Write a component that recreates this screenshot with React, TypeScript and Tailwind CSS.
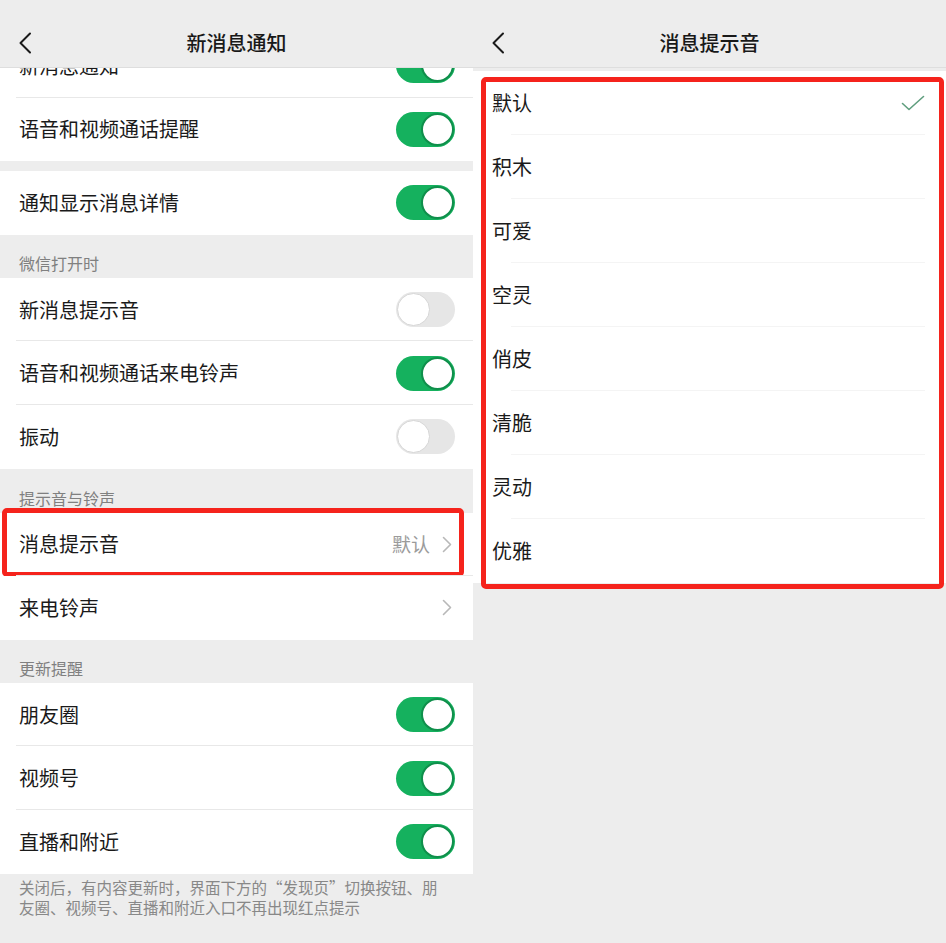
import React from 'react';

const font = "font-['Noto_Sans_CJK_SC','Noto_Sans',sans-serif]";

const BackIcon = () => (
  <svg width="14" height="22" viewBox="0 0 14 22" fill="none">
    <path d="M12 1.5 L2.5 11 L12 20.5" stroke="#1a1a1a" strokeWidth="2" strokeLinecap="round" strokeLinejoin="round" />
  </svg>
);

const Chevron = () => (
  <svg width="10" height="17" viewBox="0 0 10 17" fill="none">
    <path d="M1.5 1.5 L8.5 8.5 L1.5 15.5" stroke="#b8b8b8" strokeWidth="1.6" strokeLinecap="round" strokeLinejoin="round" />
  </svg>
);

const Toggle = ({ on }: { on: boolean }) =>
  on ? (
    <div className="w-[59px] h-[35px] rounded-full bg-[#15b15e] flex items-center justify-end pr-[1px]">
      <div className="w-[33px] h-[33px] rounded-full bg-white border-[2px] border-[#0f8f4b]" />
    </div>
  ) : (
    <div className="w-[59px] h-[35px] rounded-full bg-[#e6e6e6] flex items-center justify-start pl-[1px]">
      <div className="w-[33px] h-[33px] rounded-full bg-white border border-[#d6d6d6]" />
    </div>
  );

const Header = ({ title }: { title: string }) => (
  <div className="h-[68px] shrink-0 bg-[#ededed] border-b border-[#dedede] flex items-center pt-[18px] relative z-10">
    <div className="w-[52px] pl-[18px] flex items-center">
      <BackIcon />
    </div>
    <div className="flex-1 text-center text-[20px] font-medium text-[#191919] pr-[52px] pt-[1px]">{title}</div>
  </div>
);

const Row = ({
  label,
  last,
  children,
  className = '',
}: {
  label: string;
  last?: boolean;
  children?: React.ReactNode;
  className?: string;
}) => (
  <div className={`relative h-[63.6px] bg-white flex items-center pl-[19px] pr-[18px] ${className}`}>
    <span className="flex-1 text-[20px] text-[#1a1a1a] leading-none">{label}</span>
    {children}
    {!last && <div className="absolute left-[16px] right-0 bottom-0 h-px bg-[#e8e8e8]" />}
  </div>
);

const Section = ({ title, h }: { title: string; h: string }) => (
  <div className={`${h} flex items-end pl-[19px] pb-[4px]`}>
    <span className="text-[16px] leading-[22px] text-[#808080]">{title}</span>
  </div>
);

const sounds = ['默认', '积木', '可爱', '空灵', '俏皮', '清脆', '灵动', '优雅'];

export default function App() {
  return (
    <div className={`flex w-[946px] h-[943px] bg-[#ededed] overflow-hidden ${font}`}>
      {/* left: 新消息通知 */}
      <div className="w-[473px] h-full flex flex-col">
        <Header title="新消息通知" />
        <div className="flex-1 overflow-hidden">
          <div className="mt-[-34px]">
            <Row label="新消息通知">
              <Toggle on />
            </Row>
            <Row label="语音和视频通话提醒" last>
              <Toggle on />
            </Row>
            <div className="h-[10px]" />
            <Row label="通知显示消息详情" last>
              <Toggle on />
            </Row>

            <Section title="微信打开时" h="h-[43px]" />
            <Row label="新消息提示音">
              <Toggle on={false} />
            </Row>
            <Row label="语音和视频通话来电铃声">
              <Toggle on />
            </Row>
            <Row label="振动" last>
              <Toggle on={false} />
            </Row>

            <Section title="提示音与铃声" h="h-[44px]" />
            <Row label="消息提示音" className="pr-[21px]">
              <span className="text-[19px] text-[#9b9b9b] mr-[12px]">默认</span>
              <Chevron />
              <div className="absolute left-[2px] right-[9px] top-[-5px] bottom-[-1px] border-[5px] border-[#f5231c] rounded-[5px]" />
            </Row>
            <Row label="来电铃声" last className="pr-[21px]">
              <Chevron />
            </Row>

            <Section title="更新提醒" h="h-[43px]" />
            <Row label="朋友圈">
              <Toggle on />
            </Row>
            <Row label="视频号">
              <Toggle on />
            </Row>
            <Row label="直播和附近" last>
              <Toggle on />
            </Row>

            <div className="pl-[19px] pr-[20px] pt-[3px] text-[15.5px] leading-[20px] text-[#888888]">
              关闭后，有内容更新时，界面下方的“发现页”切换按钮、朋
              <br />
              友圈、视频号、直播和附近入口不再出现红点提示
            </div>
          </div>
        </div>
      </div>

      {/* right: 消息提示音 */}
      <div className="w-[473px] h-full flex flex-col">
        <Header title="消息提示音" />
        <div className="relative mt-[3px]">
          {sounds.map((s, i) => (
            <div key={s} className="relative h-[64px] bg-white flex items-center pl-[19px] pr-[21px]">
              <span className="flex-1 text-[20px] text-[#1a1a1a] leading-none">{s}</span>
              {i === 0 && (
                <svg width="24" height="16" viewBox="0 0 24 16" fill="none">
                  <path d="M1.5 8.5 L8 14.5 L22.5 1.5" stroke="#5f9e7e" strokeWidth="1.6" strokeLinecap="round" strokeLinejoin="round" />
                </svg>
              )}
              {i < sounds.length - 1 && (
                <div className="absolute left-[38px] right-[21px] bottom-0 h-px bg-[#f4f4f4]" />
              )}
            </div>
          ))}
          <div className="absolute left-[8px] right-[2px] top-[6px] bottom-[-6px] border-[5px] border-[#f5231c] rounded-[5px]" />
        </div>
      </div>
    </div>
  );
}
